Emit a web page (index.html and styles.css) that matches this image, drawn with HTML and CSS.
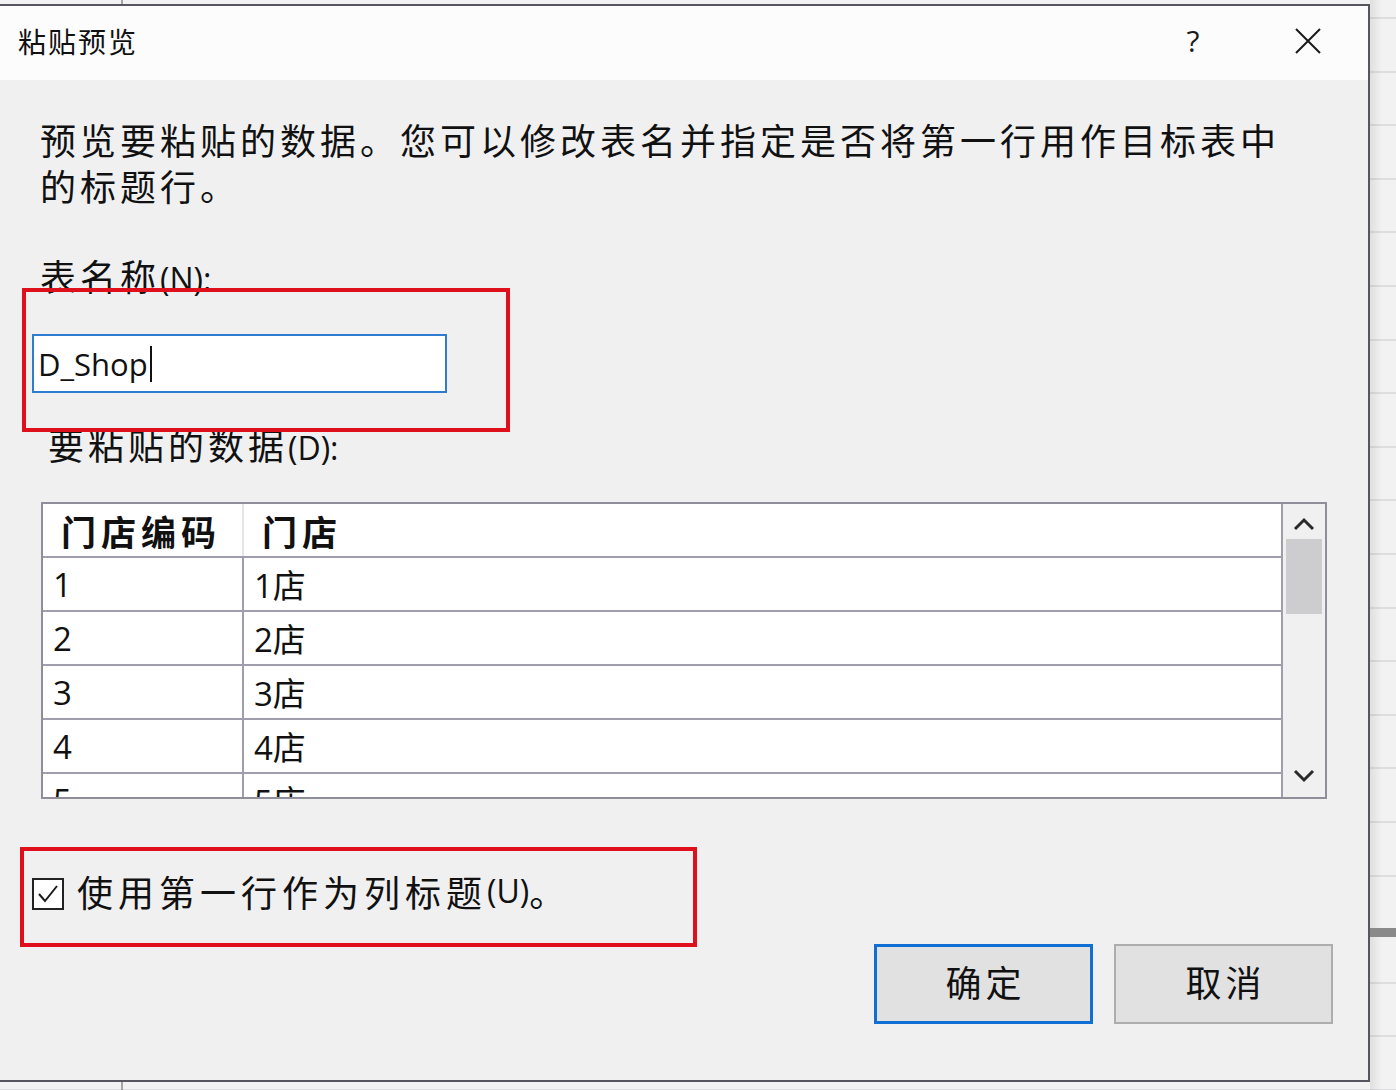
FILE: index.html
```html
<!DOCTYPE html>
<html>
<head>
    <title>粘贴预览</title>
    <link rel="stylesheet" href="styles.css">
</head>
<body>
    <div class="dialog">
        <div class="title-bar">
            <span class="title">粘贴预览</span>
            <button class="help-btn">?</button>
            <button class="close-btn">
                <svg width="26" height="26" viewBox="0 0 26 26">
                    <path d="M1 1 L25 25 M25 1 L1 25" stroke="#1a1a1a" stroke-width="2" fill="none"/>
                </svg>
            </button>
        </div>

        <div class="content">
            <p class="desc">预览要粘贴的数据。您可以修改表名并指定是否将第一行用作目标表中的标题行。</p>

            <div class="field-label name-label">表名称<span class="acc">(N):</span></div>
            <div class="name-input"><span class="typed">D_Shop</span><span class="caret"></span></div>

            <div class="field-label data-label">要粘贴的数据<span class="acc">(D):</span></div>

            <div class="grid">
                <div class="grid-body">
                    <table>
                        <colgroup>
                            <col class="col-code">
                            <col>
                        </colgroup>
                        <tr class="head">
                            <th class="code">门店编码</th>
                            <th>门店</th>
                        </tr>
                        <tr><td class="code">1</td><td>1店</td></tr>
                        <tr><td class="code">2</td><td>2店</td></tr>
                        <tr><td class="code">3</td><td>3店</td></tr>
                        <tr><td class="code">4</td><td>4店</td></tr>
                        <tr><td class="code">5</td><td>5店</td></tr>
                    </table>
                </div>
                <div class="scrollbar">
                    <svg class="arrow" width="22" height="14" viewBox="0 0 22 14">
                        <path d="M2 12 L11 3 L20 12" stroke="#2a2a2a" stroke-width="3" fill="none"/>
                    </svg>
                    <div class="thumb"></div>
                    <svg class="arrow arrow-down" width="22" height="14" viewBox="0 0 22 14">
                        <path d="M2 2 L11 11 L20 2" stroke="#2a2a2a" stroke-width="3" fill="none"/>
                    </svg>
                </div>
            </div>

            <label class="check-row">
                <span class="checkbox">
                    <svg width="28" height="28" viewBox="0 0 28 28">
                        <path d="M5 14 L11 21 L23 6" stroke="#1a1a1a" stroke-width="2" fill="none"/>
                    </svg>
                </span>
                使用第一行作为列标题<span class="acc">(U)</span>。
            </label>

            <div class="buttons">
                <button class="btn btn-default">确定</button>
                <button class="btn">取消</button>
            </div>

            <div class="mark mark-name"></div>
            <div class="mark mark-check"></div>
        </div>
    </div>
</body>
</html>
```

FILE: styles.css
```css
html, body {
    margin: 0;
    height: 100%;
}

body {
    padding-top: 4px;
    box-sizing: border-box;
    font-family: "Noto Sans CJK SC", sans-serif;
    color: #111;
    background:
        linear-gradient(#8a8a8a, #8a8a8a) no-repeat 1370px 928px / 26px 9px,
        linear-gradient(to right, rgba(0,0,0,0.08), rgba(0,0,0,0) 12px) no-repeat 1370px 0 / 26px 100%,
        linear-gradient(to right, transparent 121px, #a3a3a8 121px, #a3a3a8 123px, transparent 123px),
        repeating-linear-gradient(to bottom, #f2f2f3 0, #f2f2f3 17px, #dedee0 17px, #dedee0 19px, #f2f2f3 19px, #f2f2f3 53.6px);
    background-color: #f2f2f3;
}

.dialog {
    width: 1368px;
    border-top: 2px solid #56565f;
    border-right: 2px solid #56565f;
    border-bottom: 2px solid #56565f;
    background: #f0f0f1;
}

.title-bar {
    height: 74px;
    display: flex;
    align-items: center;
    background: #fcfcfd;
    padding-left: 18px;
}

.title {
    flex: 1;
    font-size: 28px;
    letter-spacing: 2px;
    margin-top: -4px;
}

.help-btn,
.close-btn {
    border: none;
    background: none;
    padding: 0;
    height: 74px;
    display: flex;
    align-items: center;
    justify-content: center;
}

.help-btn {
    width: 110px;
    font-family: "Open Sans", sans-serif;
    font-size: 30px;
    color: #1a1a1a;
    margin-top: -6px;
}

.close-btn {
    width: 120px;
    margin-top: -4px;
}

.content {
    position: relative;
    padding: 36px 35px 0 40px;
    height: 1000px;
    box-sizing: border-box;
}

.desc {
    margin: 0;
    width: 1260px;
    font-size: 36px;
    line-height: 46px;
    letter-spacing: 4px;
}

.field-label {
    height: 46px;
    font-size: 36px;
    line-height: 46px;
    letter-spacing: 4px;
}

.name-label {
    margin-top: 44px;
}

.acc {
    font-family: "Open Sans", sans-serif;
    font-size: 32px;
    line-height: 1;
    letter-spacing: 0;
}

.name-input {
    margin-top: 36px;
    margin-left: -8px;
    width: 407px;
    height: 55px;
    border: 2px solid #2e7cd1;
    background: #fff;
    display: flex;
    align-items: center;
    padding-left: 4px;
    box-sizing: content-box;
    font-family: "Open Sans", sans-serif;
    font-size: 31px;
}

.caret {
    width: 2px;
    height: 36px;
    background: #111;
    margin-left: 2px;
}

.data-label {
    margin-top: 28px;
    margin-left: 8px;
}

.grid {
    margin-top: 35px;
    margin-left: 1px;
    width: 1282px;
    height: 293px;
    border: 2px solid #8f8f9b;
    display: flex;
    overflow: hidden;
    background: #fff;
}

.grid-body {
    flex: 1;
    overflow: hidden;
    border-right: 2px solid #a09eae;
}

table {
    width: 100%;
    border-collapse: collapse;
    table-layout: fixed;
}

.col-code {
    width: 200px;
}

th, td {
    height: 52px;
    padding: 0 0 0 18px;
    text-align: left;
    border-bottom: 2px solid #a09eae;
    white-space: nowrap;
}

td {
    padding-left: 10px;
    font-family: "Open Sans", "Noto Sans CJK SC", sans-serif;
    font-size: 33px;
}

th {
    font-family: "Noto Sans CJK SC", sans-serif;
    font-weight: bold;
    font-size: 35px;
    letter-spacing: 5px;
}

.code {
    border-right: 2px solid #a09eae;
}

.head .code {
    border-right-color: #e4e4ea;
}

.scrollbar {
    width: 42px;
    background: #f0f0f1;
    display: flex;
    flex-direction: column;
    align-items: center;
}

.arrow {
    margin-top: 13px;
}

.thumb {
    width: 36px;
    height: 75px;
    margin-top: 8px;
    background: #cdcdcf;
}

.arrow-down {
    margin-top: auto;
    margin-bottom: 14px;
}

.check-row {
    margin-top: 69px;
    margin-left: -8px;
    height: 46px;
    display: flex;
    align-items: center;
    font-size: 36px;
    line-height: 46px;
    letter-spacing: 5px;
}

.checkbox {
    width: 28px;
    height: 28px;
    border: 2px solid #222;
    background: #fff;
    margin-right: 13px;
    margin-top: 6px;
    display: flex;
}

.buttons {
    margin-top: 30px;
    display: flex;
    justify-content: flex-end;
    gap: 21px;
}

.btn {
    width: 219px;
    height: 80px;
    background: #e1e1e1;
    border: 2px solid #adadad;
    font-family: "Noto Sans CJK SC", sans-serif;
    font-size: 36px;
    letter-spacing: 4px;
    color: #111;
    padding: 0 0 6px 4px;
}

.btn-default {
    border: 3px solid #0f6fd3;
}

.mark {
    position: absolute;
    border: 4px solid #df0f1c;
    box-sizing: border-box;
}

.mark-name {
    left: 22px;
    top: 208px;
    width: 488px;
    height: 144px;
}

.mark-check {
    left: 20px;
    top: 767px;
    width: 677px;
    height: 100px;
}
```
